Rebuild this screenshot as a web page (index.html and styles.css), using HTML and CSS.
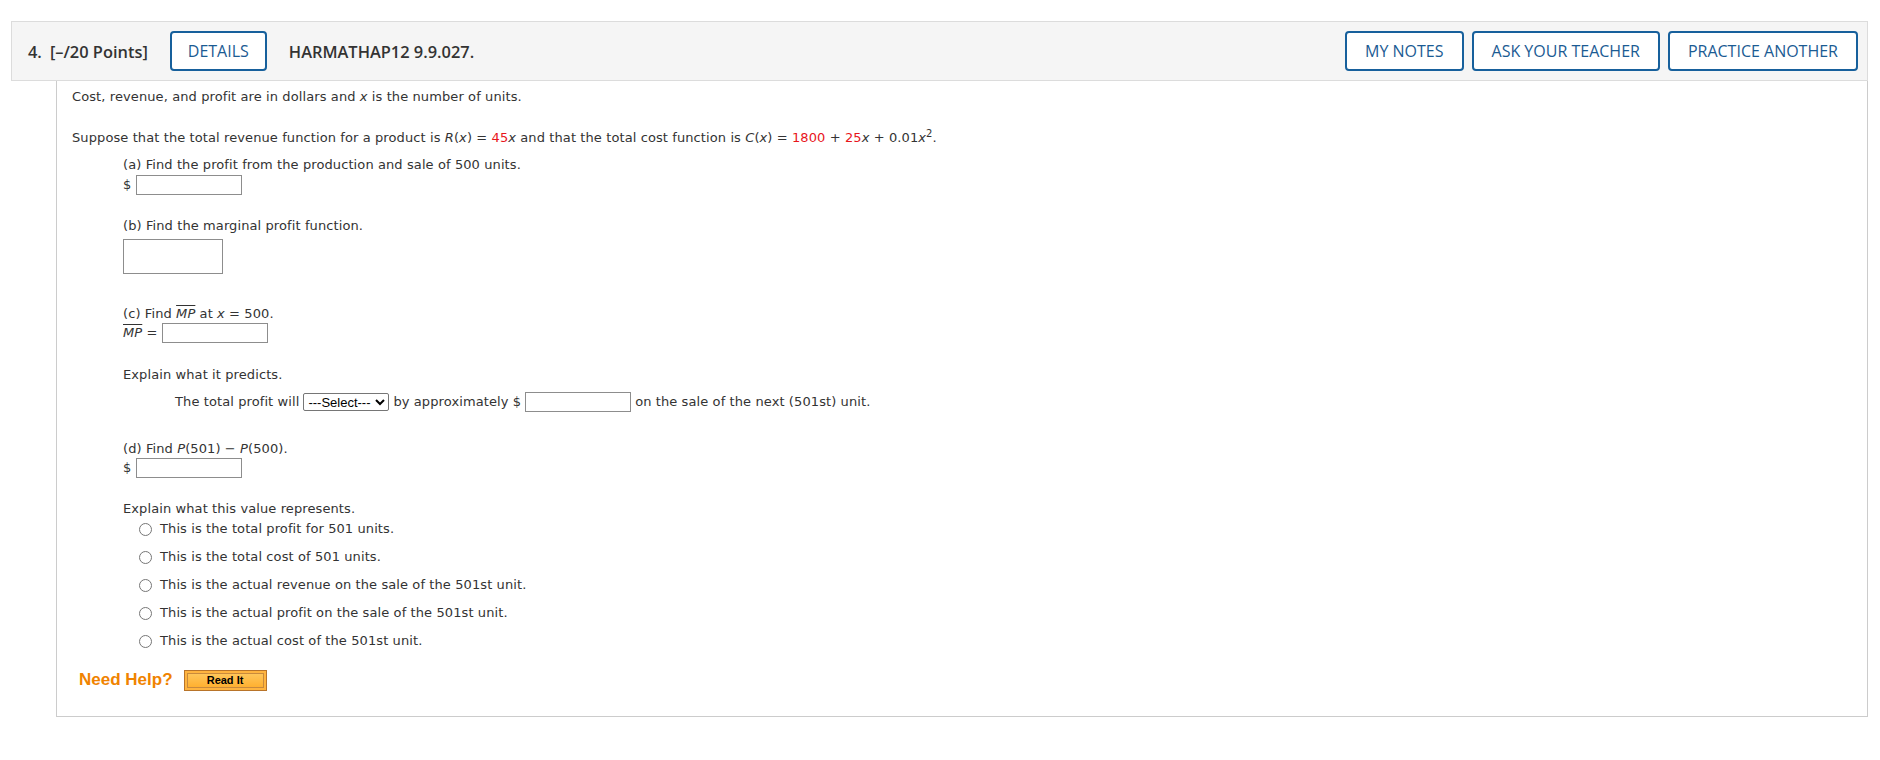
FILE: index.html
```html
<!DOCTYPE html>
<html lang="en">
<head>
    <meta charset="UTF-8">
    <meta name="viewport" content="width=device-width, initial-scale=1.0">
    <title>Question 4</title>
    <link rel="stylesheet" href="styles.css">
</head>
<body>
    <div class="page">
        <div class="question-header">
            <span class="q-number">4.</span>
            <span class="q-points">[&ndash;/20 Points]</span>
            <a href="#" class="hdr-btn details">DETAILS</a>
            <span class="q-code">HARMATHAP12 9.9.027.</span>
            <div class="hdr-actions">
                <a href="#" class="hdr-btn">MY NOTES</a>
                <a href="#" class="hdr-btn">ASK YOUR TEACHER</a>
                <a href="#" class="hdr-btn">PRACTICE ANOTHER</a>
            </div>
        </div>

        <div class="question-body">
            <p class="intro">Cost, revenue, and profit are in dollars and <i>x</i> is the number of units.</p>

            <p class="stem">Suppose that the total revenue function for a product is <i>R</i>(<i>x</i>) = <span class="num">45</span><i>x</i> and that the total cost function is <i>C</i>(<i>x</i>) = <span class="num">1800</span> + <span class="num">25</span><i>x</i> + 0.01<i>x</i><sup>2</sup>.</p>

            <div class="part">
                <p class="prompt">(a) Find the profit from the production and sale of 500 units.</p>
                <div class="answer-row">$ <input type="text" class="ans"></div>
            </div>

            <div class="part part-b">
                <p class="prompt">(b) Find the marginal profit function.</p>
                <input type="text" class="ans ans-big">
            </div>

            <div class="part part-c">
                <p class="prompt tight">(c) Find <i class="bar">MP</i> at <i>x</i> = 500.</p>
                <div class="answer-row"><i class="bar">MP</i> = <input type="text" class="ans"></div>
            </div>

            <div class="part part-explain">
                <p class="prompt">Explain what it predicts.</p>
                <div class="predict-row">
                    The total profit will
                    <select class="pick">
                        <option>---Select---</option>
                        <option>increase</option>
                        <option>decrease</option>
                    </select>
                    by approximately $
                    <input type="text" class="ans">
                    on the sale of the next (501st) unit.
                </div>
            </div>

            <div class="part part-d">
                <p class="prompt tight">(d) Find <i>P</i>(501) &minus; <i>P</i>(500).</p>
                <div class="answer-row">$ <input type="text" class="ans"></div>
            </div>

            <div class="part part-meaning">
                <p class="prompt">Explain what this value represents.</p>
                <ul class="choices">
                    <li><label><input type="radio" name="meaning"> This is the total profit for 501 units.</label></li>
                    <li><label><input type="radio" name="meaning"> This is the total cost of 501 units.</label></li>
                    <li><label><input type="radio" name="meaning"> This is the actual revenue on the sale of the 501st unit.</label></li>
                    <li><label><input type="radio" name="meaning"> This is the actual profit on the sale of the 501st unit.</label></li>
                    <li><label><input type="radio" name="meaning"> This is the actual cost of the 501st unit.</label></li>
                </ul>
            </div>

            <div class="need-help">
                <span class="help-label">Need Help?</span>
                <button class="read-it" type="button"><span>Read It</span></button>
            </div>
        </div>
    </div>
</body>
</html>
```

FILE: styles.css
```css
/* General styles */
* {
    margin: 0;
    padding: 0;
    box-sizing: border-box;
}

body {
    font-family: "DejaVu Sans", Verdana, sans-serif;
    font-size: 13px;
    color: #333;
    background: #fff;
}

.page {
    padding: 21px 12px 0 11px;
}

/* Header bar */
.question-header {
    display: flex;
    align-items: center;
    height: 60px;
    padding: 0 9px 0 16px;
    background: #f5f5f5;
    border: 1px solid #dcdcdc;
    font-family: "Open Sans", sans-serif;
    font-size: 16px;
    color: #333;
}

.q-number,
.q-points,
.q-code {
    font-weight: 600;
    font-size: 16.4px;
}

.q-number {
    margin-right: 8px;
}

.q-points {
    margin-right: 22px;
}

.q-code {
    margin-left: 22px;
}

.hdr-btn {
    display: inline-flex;
    align-items: center;
    height: 40px;
    padding: 0 16px;
    border: 2px solid #17609c;
    border-radius: 4px;
    color: #1b5b93;
    text-decoration: none;
    background: #fff;
}

.hdr-actions {
    display: flex;
    gap: 8px;
    margin-left: auto;
}

.hdr-actions .hdr-btn {
    padding: 0 18px;
}

/* Question body */
.question-body {
    margin-left: 45px;
    padding: 6px 15px 25px 15px;
    border: 1px solid #ccc;
    border-top: none;
    line-height: 20px;
    letter-spacing: 0.1px;
}

.intro {
    margin-bottom: 21px;
}

.num {
    color: #e8151b;
}

sup {
    font-size: 10px;
    line-height: 0;
}

.part {
    margin-left: 51px;
}

.stem + .part {
    margin-top: 7px;
}

.part-b {
    margin-top: 21px;
}

.part-b .prompt {
    margin-bottom: 3px;
}

.part-c {
    margin-top: 30px;
}

.part-explain {
    margin-top: 22px;
}

.part-d {
    margin-top: 27px;
}

.part-meaning {
    margin-top: 21px;
}

.tight {
    line-height: 19px;
}

.answer-row {
    display: flex;
    align-items: center;
    height: 20px;
    white-space: pre;
}

.ans {
    width: 106px;
    height: 20px;
    border: 1px solid #8d8d8d;
    background: #fff;
    font: inherit;
}

.ans-big {
    display: block;
    width: 100px;
    height: 35px;
}

.bar {
    text-decoration: overline;
}

.predict-row {
    margin-top: 7px;
    margin-left: 52px;
    height: 20px;
    display: flex;
    align-items: center;
    gap: 4px;
}

.pick {
    width: 86px;
    height: 18px;
    font-family: "Liberation Sans", Arial, sans-serif;
    font-size: 13px;
    letter-spacing: 0;
    color: #000;
    border: 1px solid #767676;
    border-radius: 2px;
    background: #fff;
}

.choices {
    list-style: none;
    margin-left: 16px;
}

.choices li {
    height: 20px;
    margin-bottom: 8px;
}

.choices label {
    display: flex;
    align-items: center;
    gap: 6px;
}

.choices input {
    width: 13px;
    height: 13px;
    margin: 0 2px 0 0;
}

/* Help row */
.need-help {
    display: flex;
    align-items: center;
    gap: 11px;
    margin-top: 18px;
    margin-left: 7px;
    height: 22px;
    letter-spacing: 0;
}

.help-label {
    font-family: "Liberation Sans", Arial, sans-serif;
    font-weight: bold;
    font-size: 17px;
    color: #f08300;
}

.read-it {
    width: 83px;
    height: 21px;
    padding: 2px;
    border: 1px solid #b8742a;
    background: #ffb43f;
    cursor: pointer;
}

.read-it span {
    display: block;
    height: 100%;
    border: 1px solid #c98a3c;
    background: linear-gradient(#ffc65a, #ffb030);
    font-family: "Liberation Sans", Arial, sans-serif;
    font-weight: bold;
    font-size: 11px;
    line-height: 13px;
    color: #000;
}
```
